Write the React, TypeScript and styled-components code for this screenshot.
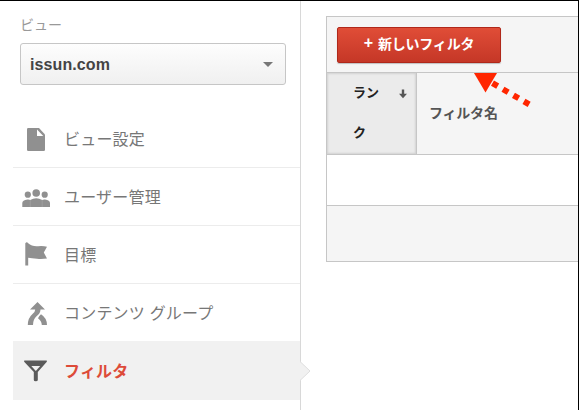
import React from "react";
import styled, { createGlobalStyle, css } from "styled-components";

const GlobalStyle = createGlobalStyle`
  * { box-sizing: border-box; }
  body {
    margin: 0;
    background: #fff;
    font-family: "Liberation Sans", "Noto Sans CJK JP", sans-serif;
    overflow: hidden;
  }
`;

const Page = styled.div`
  display: flex;
  width: 579px;
  height: 410px;
  border-top: 1px solid #000;
  border-right: 1px solid #000;
  overflow: hidden;
`;

const Sidebar = styled.aside`
  flex: none;
  width: 301px;
  padding-left: 13px;
  border-right: 1px solid #d8d8d8;
`;

const SectionLabel = styled.div`
  height: 42px;
  padding: 14px 0 0 7px;
  font-size: 14px;
  line-height: 20px;
  color: #999;
`;

const ViewSelect = styled.button`
  display: flex;
  align-items: center;
  justify-content: space-between;
  width: 266px;
  height: 42px;
  margin: 0 0 0 7px;
  padding: 2px 12px 0 9px;
  border: 1px solid #c6c6c6;
  border-radius: 3px;
  background: linear-gradient(#fdfdfd, #f0f0f0);
  font: bold 16px "Liberation Sans", sans-serif;
  letter-spacing: 0.1px;
  color: #444;
`;

const Caret = styled.span`
  margin-bottom: 1px;
  border: 5px solid transparent;
  border-top-color: #777;
  border-bottom: 0;
`;

const Menu = styled.nav`
  display: flex;
  flex-direction: column;
  padding-top: 25px;
`;

const MenuItem = styled.a<{ $active?: boolean; $last?: boolean }>`
  position: relative;
  display: flex;
  align-items: center;
  height: 58px;
  padding: 0 0 0 8px;
  border-bottom: 1px solid #ececec;
  font-size: 16px;
  color: #777;
  ${(p) => p.$last && css`
    height: 57px;
    border-bottom: 0;
    padding-top: 1px;
  `}
  ${(p) => p.$active && css`
    height: 59px;
    border-bottom: 0;
    background: #f1f1f1;
    color: #dd4b39;
    font-weight: bold;
  `}
`;

const MenuText = styled.span`
  margin-left: 13px;
  padding-top: 2px;
  line-height: 24px;
  letter-spacing: 0.2px;
  white-space: nowrap;
`;

const IconSvg = styled.svg<{ $dark?: boolean }>`
  flex: none;
  width: 30px;
  height: 30px;
  color: ${(p) => (p.$dark ? "#5a5a5a" : "#909090")};
`;

const Pointer = styled.svg`
  position: absolute;
  left: 287px;
  top: 20px;
  width: 11px;
  height: 20px;
`;

const Main = styled.main`
  flex: 1;
  min-width: 0;
  padding: 15px 0 0 25px;
`;

const Panel = styled.section`
  position: relative;
  border: 1px solid #c6c6c6;
  border-right: 0;
`;

const Toolbar = styled.div`
  height: 56px;
  padding: 10px;
  background: #f5f5f5;
  border-bottom: 1px solid #c6c6c6;
`;

const NewButton = styled.button`
  display: flex;
  align-items: center;
  justify-content: center;
  gap: 5px;
  width: 164px;
  height: 36px;
  padding: 0 0 4px;
  border: 1px solid #b0281a;
  border-radius: 2px;
  background: linear-gradient(#e04d37, #c53727);
  box-shadow: 0 1px 1px rgba(0, 0, 0, 0.22);
  font: bold 14px "Liberation Sans", "Noto Sans CJK JP", sans-serif;
  letter-spacing: -0.2px;
  color: #fff;
`;

const Plus = styled.span`
  font-size: 16px;
  line-height: 20px;
`;

const HeaderRow = styled.div`
  display: grid;
  grid-template-columns: 90px 1fr;
  height: 82px;
  background: #f5f5f5;
  border-bottom: 1px solid #c6c6c6;
`;

const RankCell = styled.div`
  display: flex;
  justify-content: space-between;
  padding: 0 8px 0 26px;
  background: #ebebeb;
  border-right: 1px solid #c6c6c6;
  box-shadow: inset 0 0 2px 1px #d2d2d2;
  font-size: 13px;
  font-weight: bold;
  line-height: 40px;
  color: #222;
`;

const RankText = styled.span`
  width: 28px;
  word-break: break-all;
`;

const SortArrow = styled.svg`
  width: 10px;
  height: 10px;
  margin-top: 16px;
`;

const NameCell = styled.div`
  display: flex;
  align-items: center;
  padding: 0 0 4px 12px;
  font-size: 14px;
  font-weight: bold;
  letter-spacing: -0.2px;
  color: #555;
`;

const EmptyRow = styled.div`
  height: 51px;
  border-bottom: 1px solid #c6c6c6;
`;

const FooterRow = styled.div`
  height: 55px;
  background: #f5f5f5;
`;

const Annotation = styled.svg`
  position: absolute;
  left: 143px;
  top: 56px;
  width: 64px;
  height: 38px;
`;

const FileIcon = () => (
  <IconSvg viewBox="0 0 30 30">
    <path d="M6 5.2Q6 4 7.2 4H18L24 10.5V25.8Q24 27 22.8 27H7.2Q6 27 6 25.8Z" fill="currentColor" />
    <path d="M16 5.5L22.3 12H16Z" fill="#fff" />
  </IconSvg>
);

const PeopleIcon = () => (
  <IconSvg viewBox="0 0 30 30" fill="currentColor">
    <circle cx="6.8" cy="12.7" r="3.1" />
    <circle cx="15.2" cy="11" r="3.8" />
    <circle cx="23.7" cy="12.7" r="3.1" />
    <path d="M1.3 25V21Q1.3 18 6.5 17.5Q8.5 17.4 9.2 18Q15.2 14.4 21.2 18Q22 17.4 24 17.5Q29 18 29 21V25Z" />
    <path d="M9.3 18V25M21.2 18V25" stroke="#aaa" strokeWidth=".6" />
  </IconSvg>
);

const FlagIcon = () => (
  <IconSvg viewBox="0 0 30 30" fill="currentColor">
    <path d="M4.3 3.3Q5.8 1.3 7.2 3.3Q11 6.7 17 6.2Q22 5.6 26 6.8L22.8 12.5L26 18.5Q21 19.3 16 18.8Q10.5 18.1 7.2 17.8V25.5H4.3Z" />
  </IconSvg>
);

const MergeIcon = () => (
  <IconSvg viewBox="0 0 30 30" fill="currentColor">
    <path d="M16.5 4L24 11.5H19.5Q19.4 15.5 15.5 18.3Q12 21.5 12 27H6.8Q6.8 20 11.5 16Q14.2 14 14.2 11.5H9Z" />
    <path d="M20 16.2Q26 20 26 27H20.8Q20.6 23 17 20.3Q17.6 18.2 20 16.2Z" />
  </IconSvg>
);

const FilterIcon = () => (
  <IconSvg viewBox="0 0 30 30" $dark>
    <path
      d="M3.5 4.5H25.5Q26.5 4.5 25.6 6L16.8 16V24Q16.8 25.3 14.7 25.3Q12.8 25.3 12.8 24V16L3.4 6Q2.5 4.5 3.5 4.5Z"
      fill="currentColor"
    />
    <path d="M10.3 10H19.2L14.8 15Z" fill="#f1f1f1" />
  </IconSvg>
);

const App: React.FC = () => (
  <>
    <GlobalStyle />
    <Page>
      <Sidebar>
        <SectionLabel>ビュー</SectionLabel>
        <ViewSelect>
          issun.com
          <Caret />
        </ViewSelect>
        <Menu>
          <MenuItem><FileIcon /><MenuText>ビュー設定</MenuText></MenuItem>
          <MenuItem><PeopleIcon /><MenuText>ユーザー管理</MenuText></MenuItem>
          <MenuItem><FlagIcon /><MenuText>目標</MenuText></MenuItem>
          <MenuItem $last><MergeIcon /><MenuText>コンテンツ グループ</MenuText></MenuItem>
          <MenuItem $active>
            <FilterIcon />
            <MenuText>フィルタ</MenuText>
            <Pointer viewBox="0 0 11 20">
              <path d="M0 .5L10 10L0 19.5Z" fill="#f1f1f1" />
              <path d="M0 .5L10 10L0 19.5" fill="none" stroke="#dedede" />
            </Pointer>
          </MenuItem>
        </Menu>
      </Sidebar>
      <Main>
        <Panel>
          <Toolbar>
            <NewButton><Plus>+</Plus><span>新しいフィルタ</span></NewButton>
          </Toolbar>
          <HeaderRow>
            <RankCell>
              <RankText>ランク</RankText>
              <SortArrow viewBox="0 0 10 10">
                <path d="M3.8 .5H6.2V4.8H9L5 9.2L1 4.8H3.8Z" fill="#555" />
              </SortArrow>
            </RankCell>
            <NameCell>フィルタ名</NameCell>
          </HeaderRow>
          <EmptyRow />
          <FooterRow />
          <Annotation viewBox="0 0 64 38" fill="#ff2600">
            <path d="M4 0H27L15.5 19.5Z" />
            <path d="M22.5 10.2L60 31.8" fill="none" stroke="#ff2600" strokeWidth="6" strokeDasharray="6 6.1" />
          </Annotation>
        </Panel>
      </Main>
    </Page>
  </>
);

export default App;
